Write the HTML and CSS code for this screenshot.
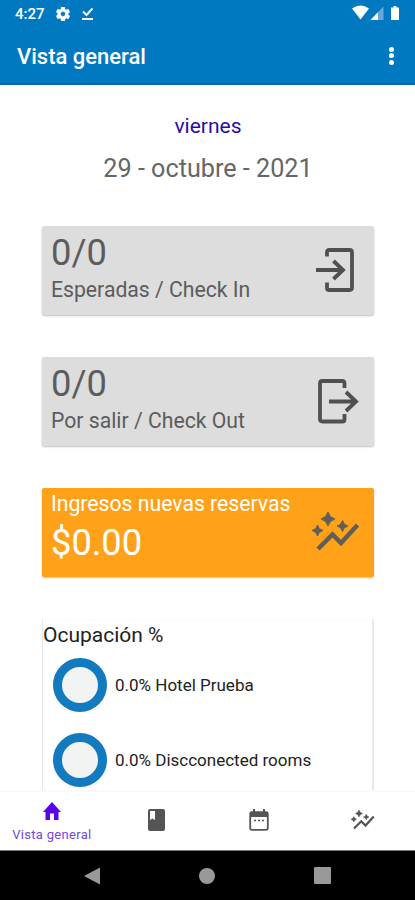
FILE: index.html
```html
<!DOCTYPE html>
<html lang="es">
<head>
    <meta charset="UTF-8">
    <meta name="viewport" content="width=device-width, initial-scale=1.0">
    <title>Vista general</title>
    <link rel="stylesheet" href="styles.css">
</head>
<body>
    <!-- Shared shape for the income card and the last tab -->
    <svg class="defs" width="0" height="0">
        <symbol id="insights" viewBox="0 0 48 40">
            <path d="M6 37 L20.5 22.5 L29 31 L45.5 13" fill="none" stroke="currentColor" stroke-width="4.5" />
            <path d="M16 0 Q17.5 5.5 23 7 Q17.5 8.500 16 14 Q14.500 8.500 9 7 Q14.500 5.500 16 0Z M5.500 13 Q6.500 17.500 11 18.500 Q6.500 19.500 5.500 24 Q4.500 19.500 0 18.500 Q4.500 17.500 5.500 13Z M30.500 8.500 Q31.500 13 36 14 Q31.500 15 30.500 19.500 Q29.500 15 25 14 Q29.500 13 30.500 8.500Z" fill="currentColor" stroke="currentColor" />
        </symbol>
    </svg>

    <div class="screen">
        <header class="header">
            <div class="status">
                <span class="clock">4:27</span>
                <svg class="gear" width="14" height="14" viewBox="2 2 20 20">
                    <path fill="#fff" stroke="#fff" stroke-width="0.500" fill-rule="evenodd" d="M19.430 12.980c.040-.320.070-.640.070-.980s-.030-.660-.070-.980l2.110-1.650c.190-.150.240-.420.120-.640l-2-3.460c-.120-.220-.390-.300-.610-.220l-2.490 1c-.520-.400-1.080-.730-1.690-.980l-.380-2.650C14.460 2.180 14.250 2 14 2h-4c-.250 0-.460.180-.490.420l-.380 2.650c-.610.250-1.170.590-1.690.980l-2.490-1c-.230-.090-.490 0-.610.220l-2 3.460c-.130.220-.070.490.120.640l2.110 1.650c-.040.320-.070.650-.070.980s.030.660.070.980l-2.110 1.650c-.190.150-.240.420-.120.640l2 3.460c.120.220.390.300.610.220l2.490-1c.520.400 1.080.730 1.690.980l.380 2.650c.030.240.240.420.490.420h4c.250 0 .460-.180.490-.420l.380-2.650c.610-.250 1.170-.590 1.690-.980l2.490 1c.230.090.490 0 .610-.220l2-3.460c.120-.220.070-.490-.120-.640l-2.110-1.650zM12 15.500a3.500 3.500 0 1 1 0-7 3.500 3.500 0 0 1 0 7z"/>
                </svg>
                <svg class="done" width="13" height="14" viewBox="0 0 13 14">
                    <path d="M2 4.500 L5.500 8 L11.500 1.500" fill="none" stroke="#fff" stroke-width="2"/>
                    <path d="M1 12H12" stroke="#fff" stroke-width="2"/>
                </svg>
                <svg class="signals" width="49" height="16" viewBox="0 0 49 16">
                    <path d="M0 3.500 Q8.500 -2.500 17 3.500 L8.500 14.500Z" fill="#fff"/>
                    <path d="M31.500 1.500V15H18.500Z" fill="#65abd9"/>
                    <path d="M26 7.200V15H18.500Z" fill="#fff"/>
                    <path d="M41.500 1h3v1.500h2.500V15h-8V2.500h2.500Z" fill="#fff"/>
                </svg>
            </div>
            <div class="toolbar">
                <h1>Vista general</h1>
                <div class="more"><i></i><i></i><i></i></div>
            </div>
        </header>

        <main class="content">
            <div class="weekday">viernes</div>
            <div class="date">29 - octubre - 2021</div>

            <section class="card">
                <div>
                    <div class="number">0/0</div>
                    <div class="caption">Esperadas / Check In</div>
                </div>
                <svg class="door" width="43" height="46" viewBox="0 0 43 46">
                    <g fill="none" stroke="#505050" stroke-width="3.800">
                        <path d="M11 9.500V5Q11 3 13 3H33.500Q36 3 36 5.500V40.500Q36 43 33.500 43H13Q11 43 11 41V35.500"/>
                        <path d="M0 23H27.500M17.500 14L27 23L17.500 32"/>
                    </g>
                </svg>
            </section>

            <section class="card">
                <div>
                    <div class="number">0/0</div>
                    <div class="caption">Por salir / Check Out</div>
                </div>
                <svg class="door" width="43" height="46" viewBox="0 0 43 46">
                    <g fill="none" stroke="#505050" stroke-width="3.800">
                        <path d="M28.500 10V5Q28.500 3 26.500 3H6.500Q4 3 4 5.500V41Q4 43.500 6.500 43.500H26.500Q28.500 43.500 28.500 41.500V36"/>
                        <path d="M13 23.500H40.500M30 14L40 23.500L30 33"/>
                    </g>
                </svg>
            </section>

            <section class="card income">
                <div>
                    <div class="caption">Ingresos nuevas reservas</div>
                    <div class="number">$0.00</div>
                </div>
                <svg class="trend" width="48" height="40"><use href="#insights"/></svg>
            </section>

            <section class="occupation">
                <h2>Ocupación %</h2>
                <div class="room"><span class="ring"></span>0.0% Hotel Prueba</div>
                <div class="room"><span class="ring"></span>0.0% Discconected rooms</div>
            </section>
        </main>

        <nav class="tabs">
            <a class="tab active">
                <svg width="18" height="18" viewBox="0 0 18 18"><path d="M7 18V11.500H11V18H15.500V10H18L9 0L0 10H2.500V18Z" fill="#5a05e8"/></svg>
                <span>Vista general</span>
            </a>
            <a class="tab">
                <svg width="18" height="22" viewBox="0 0 18 22"><rect x="1" width="17" height="22" rx="2" fill="#555"/><path d="M3 2H8V11L5.500 9.500L3 11Z" fill="#fff"/></svg>
            </a>
            <a class="tab">
                <svg width="20" height="22" viewBox="0 0 20 22">
                    <rect x="1.200" y="3.200" width="17.600" height="17.600" rx="1.500" fill="none" stroke="#555" stroke-width="1.800"/>
                    <path d="M1 3H19V8H1ZM4 0H6V4H4ZM14 0H16V4H14Z" fill="#555"/>
                    <path d="M5 11.500H7M9 11.500H11M13 11.500H15" stroke="#555" stroke-width="1.500"/>
                </svg>
            </a>
            <a class="tab">
                <svg width="24" height="20"><use href="#insights"/></svg>
            </a>
        </nav>

        <footer class="system">
            <svg width="16" height="18" viewBox="0 0 16 18"><path d="M0 9L16 0.500V17.500Z" fill="#999"/></svg>
            <span class="circle"></span>
            <span class="square"></span>
        </footer>
    </div>
</body>
</html>
```
FILE: styles.css
```css
* {
    box-sizing: border-box;
}
body {
    margin: 0;
    font-family: Roboto, "Liberation Sans", sans-serif;
    background: #fff;
}
.defs {
    display: none;
}
.screen {
    height: 900px;
    display: flex;
    flex-direction: column;
    overflow: hidden;
}

/* Header */
.header {
    height: 85px;
    flex: none;
    background: #0079c1;
    border-bottom: 2px solid #0866ae;
    color: #fff;
}
.status {
    height: 28px;
    display: flex;
    align-items: center;
    padding: 0 10px 0 15px;
}
.clock {
    width: 29px;
    font-size: 15px;
    font-weight: 500;
    white-space: nowrap;
}
.gear {
    margin-left: 12px;
}
.done {
    margin-left: 11px;
    margin-top: -1px;
}
.signals {
    margin-left: auto;
    margin-right: 4px;
    margin-top: -2px;
}
.toolbar {
    height: 56px;
    display: flex;
    align-items: center;
    justify-content: space-between;
    padding: 0 21px 0 17px;
}
h1 {
    margin: 0;
    font-size: 22px;
    font-weight: 500;
}
.more {
    display: flex;
    flex-direction: column;
    gap: 1.5px;
    margin-top: -1px;
}
.more i {
    width: 5px;
    height: 5px;
    border-radius: 50%;
    background: #fff;
}

/* Content */
.content {
    flex: 1;
    min-height: 0;
    overflow: hidden;
    padding: 28px 41px 0 42px;
}
.weekday {
    text-align: center;
    font-size: 21px;
    line-height: 26px;
    color: #2a0ba6;
}
.date {
    margin-top: 14px;
    margin-bottom: 41px;
    text-align: center;
    font-size: 25.200px;
    line-height: 32px;
    color: #666;
}
.card {
    height: 89px;
    margin-bottom: 42px;
    padding: 5px 15px 0 9px;
    display: flex;
    justify-content: space-between;
    align-items: flex-start;
    background: #ddd;
    color: #5c5c5c;
    border-radius: 2px;
    box-shadow: 0 1px 2px rgba(0, 0, 0, 0.25);
}
.number {
    font-size: 36.300px;
    line-height: 43px;
}
.caption {
    font-size: 21.200px;
    line-height: 32px;
}
.door {
    margin-top: 16px;
}
.income {
    padding: 0 14px 0 9px;
    background: #ffa21a;
    color: #fff;
}
.income .number {
    line-height: 46px;
}
.trend {
    margin-top: 24px;
    color: #5f5f58;
}
.occupation {
    height: 300px;
    border: 1px solid #e8e8e8;
    border-top-color: #fafafa;
    border-width: 1px 2px 1px 1px;
}
h2 {
    margin: 0;
    font-size: 21px;
    font-weight: 400;
    line-height: 31px;
    color: #222;
}
.room {
    display: flex;
    align-items: center;
    height: 54px;
    margin: 7px 0 21px 10px;
    font-size: 17px;
    color: #222;
}
.ring {
    width: 54px;
    height: 54px;
    margin-right: 8px;
    border: 9px solid #127abf;
    border-radius: 50%;
    background: #f2f3f3;
}

/* Bottom tabs */
.tabs {
    height: 60px;
    flex: none;
    display: flex;
    background: #fff;
    border-top: 2px solid #fafafa;
}
.tab {
    flex: 1;
    display: flex;
    flex-direction: column;
    align-items: center;
    justify-content: center;
    color: #555;
}
.tab svg {
    margin-bottom: 2px;
}
.active {
    justify-content: flex-start;
    padding-top: 10px;
    color: #7048e0;
    font-size: 13px;
    letter-spacing: 0.300px;
    line-height: 16px;
}
.active span {
    margin-top: 5px;
}

/* Android buttons */
.system {
    height: 50px;
    flex: none;
    display: flex;
    align-items: center;
    justify-content: center;
    gap: 99px;
    background: #000;
    border-top: 1px solid #777;
}
.circle {
    width: 16px;
    height: 16px;
    border-radius: 50%;
    background: #999;
}
.square {
    width: 17px;
    height: 17px;
    border-radius: 1px;
    background: #999;
}
```
